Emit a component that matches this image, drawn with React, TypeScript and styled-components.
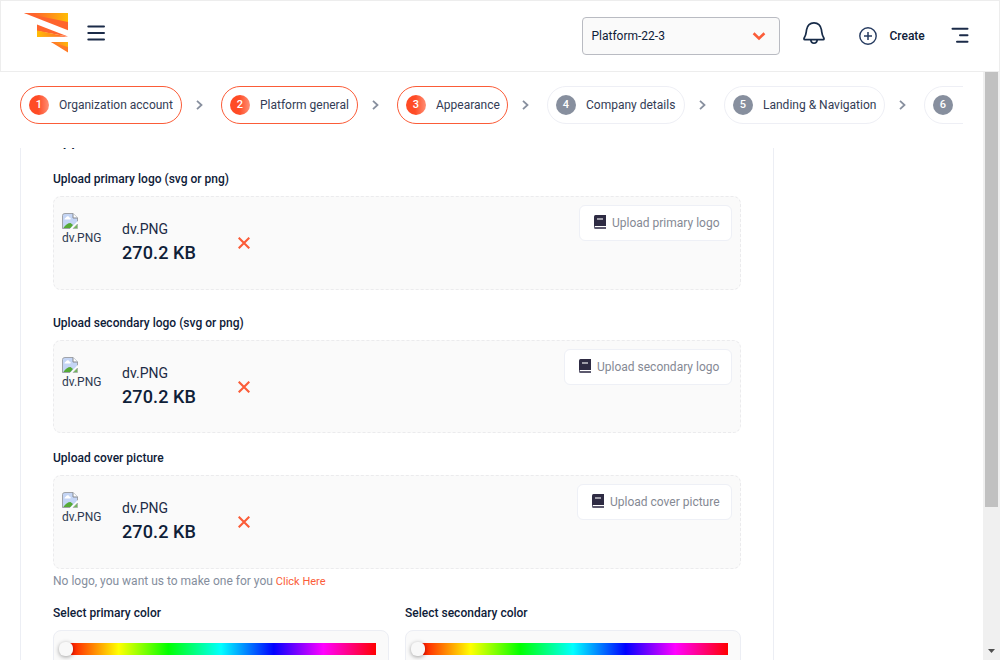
import React from "react";
import styled, { createGlobalStyle } from "styled-components";

const GlobalStyle = createGlobalStyle`
  * { box-sizing: border-box; }
  body {
    margin: 0;
    overflow: hidden;
    background: #fff;
    color: #0e2038;
    font-family: Roboto, "Liberation Sans", sans-serif;
    font-size: 12px;
  }
`;

const Page = styled.div`
  width: 1000px;
  height: 660px;
  display: flex;
  flex-direction: column;
  overflow: hidden;
`;

const Header = styled.header`
  height: 72px;
  flex: none;
  display: flex;
  align-items: flex-start;
  border: 1px solid #ededed;
  padding-left: 23px;
  background: #fff;
`;

const Logo = styled.svg`
  margin-top: 12px;
  flex: none;
`;

const MenuIcon = styled.svg`
  margin: 24px 0 0 19px;
  flex: none;
`;

const PlatformSelect = styled.div`
  width: 198px;
  height: 38px;
  margin: 16px 0 0 auto;
  padding: 0 13px 0 8.5px;
  display: flex;
  align-items: center;
  justify-content: space-between;
  border: 1px solid #b9bbc2;
  border-radius: 4px;
  background: #fafafa;
`;

const BellIcon = styled.svg`
  margin: 20px 0 0 23px;
  flex: none;
`;

const CreateButton = styled.div`
  height: 20px;
  margin: 25px 0 0 34px;
  display: flex;
  align-items: center;
  gap: 12.5px;
  width: 67px;
  font-weight: 500;
  white-space: nowrap;
`;

const FilterIcon = styled.svg`
  margin: 26px 30px 0 25px;
  flex: none;
`;

const Body = styled.div`
  flex: 1;
  min-height: 0;
  display: flex;
`;

const Main = styled.main`
  flex: 1;
  min-width: 0;
  padding: 14px 20px 0;
  display: flex;
  flex-direction: column;
`;

const Steps = styled.nav`
  width: 943px;
  height: 62px;
  flex: none;
  display: flex;
  align-items: flex-start;
  overflow: hidden;
`;

const Step = styled.div<{ $active: boolean; $width: number }>`
  width: ${(p) => p.$width}px;
  height: 38px;
  flex: none;
  padding: 0 8px;
  display: flex;
  align-items: center;
  gap: 10px;
  border: 1px solid ${(p) => (p.$active ? "#fb5c38" : "#eeeff5")};
  border-radius: 19px;
  color: #333c55;
  white-space: nowrap;
`;

const StepNumber = styled.span<{ $active: boolean }>`
  width: 20px;
  height: 20px;
  flex: none;
  border-radius: 50%;
  background: ${(p) => (p.$active ? "linear-gradient(90deg, #ff4b25 45%, #ff8f75)" : "#878f9e")};
  color: #fff;
  font-size: 11px;
  font-weight: 500;
  line-height: 20px;
  text-align: center;
`;

const StepArrow = styled.svg`
  margin: 14px 18.5px 0 13.5px;
  flex: none;
`;

const FormViewport = styled.div`
  flex: 1;
  min-height: 0;
  overflow: hidden;
`;

const FormCard = styled.section`
  width: 754px;
  height: 700px;
  margin-top: -15px;
  padding: 0 32px;
  border: 1px solid #eceef4;
  border-top: 0;
`;

const Title = styled.h2`
  margin: 0;
  height: 37px;
  font-size: 15px;
  font-weight: 500;
  line-height: 16px;
`;

const Label = styled.div`
  height: 26px;
  line-height: 18px;
  font-weight: 500;
  letter-spacing: 0.01px;
`;

const UploadBox = styled.div<{ $gap: number; $height: number }>`
  width: 688px;
  height: ${(p) => p.$height}px;
  margin-bottom: ${(p) => p.$gap}px;
  padding: 8px;
  display: flex;
  align-items: flex-start;
  border: 1px dashed #ebebed;
  border-radius: 8px;
  background: #fafafa;
`;

const Preview = styled.div`
  width: 60px;
  padding-top: 8px;
  color: #2d3950;
  line-height: 18px;
`;

const PreviewImage = styled.svg`
  display: block;
`;

const FileInfo = styled.div`
  width: 116px;
  padding-top: 14px;
`;

const FileName = styled.div`
  font-size: 14px;
  line-height: 20px;
  color: #1c2b46;
`;

const FileSize = styled.div`
  font-size: 18px;
  font-weight: 500;
  line-height: 28px;
  letter-spacing: 0.12px;
`;

const RemoveIcon = styled.svg`
  margin-top: 32px;
`;

const UploadButton = styled.button<{ $width: number }>`
  width: ${(p) => p.$width}px;
  height: 36px;
  margin-left: auto;
  padding: 0 0 0 14px;
  display: flex;
  align-items: center;
  gap: 6px;
  border: 1px solid #eef0f6;
  border-radius: 6px;
  background: #fff;
  color: #858994;
  font: 12px Roboto, "Liberation Sans", sans-serif;
  white-space: nowrap;
`;

const BookGlyph = styled.svg`
  flex: none;
  margin-bottom: 2px;
`;

const Hint = styled.div`
  height: 32px;
  padding-top: 3px;
  line-height: 18px;
  color: #858e9d;
`;

const HintLink = styled.a`
  color: #fb5c38;
  font-size: 11px;
`;

const ColorRow = styled.div`
  display: flex;
  gap: 16px;
  margin-top: 3px;
`;

const ColorField = styled.div`
  width: 336px;
`;

const ColorPanel = styled.div`
  height: 120px;
  padding: 12px 12px 0;
  border: 1px solid #eceef4;
  border-radius: 8px;
  background: #fafafa;
`;

const HueBar = styled.div`
  height: 12px;
  display: flex;
  align-items: center;
  background: linear-gradient(90deg, #f00 0%, #ff0 17%, #0f0 33%, #0ff 50%, #00f 67%, #f0f 83%, #f00 100%);
`;

const HueHandle = styled.span`
  width: 14px;
  height: 14px;
  margin-left: -7px;
  border-radius: 6px;
  background: #f8f8f8;
  box-shadow: 0 1px 4px rgba(0, 0, 0, 0.37);
`;

const ScrollTrack = styled.div`
  width: 17px;
  flex: none;
  padding: 0 2px 7px;
  display: flex;
  flex-direction: column;
  align-items: center;
  justify-content: space-between;
  background: #f0f0f0;
`;

const ScrollThumb = styled.div`
  width: 13px;
  height: 435px;
  background: #c1c1c1;
`;

const steps = [
  { label: "Organization account", width: 162 },
  { label: "Platform general", width: 137 },
  { label: "Appearance", width: 111 },
  { label: "Company details", width: 138 },
  { label: "Landing & Navigation", width: 161 },
  { label: "", width: 140 },
];

const uploads = [
  { label: "Upload primary logo (svg or png)", action: "Upload primary logo", gap: 24, height: 94, width: 153 },
  { label: "Upload secondary logo (svg or png)", action: "Upload secondary logo", gap: 16, height: 93, width: 168 },
  { label: "Upload cover picture", action: "Upload cover picture", gap: 0, height: 94, width: 155 },
];

function BrandLogo() {
  return (
    <Logo width="44" height="40" viewBox="0 0 44 40">
      <defs>
        <linearGradient id="topBand" gradientUnits="userSpaceOnUse" x1="10" y1="0" x2="44" y2="0">
          <stop offset="0" stopColor="#ff642d" />
          <stop offset="1" stopColor="#ffbd05" />
        </linearGradient>
        <linearGradient id="middleBand" gradientUnits="userSpaceOnUse" x1="13" y1="0" x2="40" y2="0">
          <stop offset="0" stopColor="#ffbd05" />
          <stop offset="1" stopColor="#ff642d" />
        </linearGradient>
        <linearGradient id="bottomBand" gradientUnits="userSpaceOnUse" x1="27" y1="0" x2="44" y2="0">
          <stop offset="0" stopColor="#ff702b" />
          <stop offset="1" stopColor="#ffb508" />
        </linearGradient>
      </defs>
      <path d="M0 0H44V17.3Z" fill="#ff642d" />
      <path d="M0 0H44V9Z" fill="url(#topBand)" />
      <path d="M13 11.5L44 23.5L13 18Z" fill="#ff642d" />
      <path d="M13 17.5L44 23.7L13 24Z" fill="url(#middleBand)" />
      <path d="M27 29H44V39.5Z" fill="#ff7a25" />
      <path d="M27 29H44V34Z" fill="url(#bottomBand)" />
    </Logo>
  );
}

function BrokenImage() {
  return (
    <PreviewImage width="16" height="16" viewBox="0 0 16 16">
      <path d="M.5 15.5V2.5Q.5 .5 3 .5H11L15.5 5V9.5L9 15.5Z" fill="#c4d5f5" />
      <path d="M2.5 6.5C2.5 4.8 4 5 4.3 4C5 2.7 7 3 7.3 4.5C9 4.5 9.2 6.5 8 6.5Z" fill="#fff" />
      <path d="M1 15.5C3 12 6 10 8.5 10L11 12L8 15.5Z" fill="#55aa35" />
      <path d="M.5 15.5V2.5Q.5 .5 3 .5H11L15.5 5V8.5M.5 15.5H8" fill="none" stroke="#a0a3a9" />
      <path d="M11 .5V5H15.5" fill="#fff" stroke="#85898f" />
      <path d="M8 16L15.8 8V11L11 16Z" fill="#fff" />
      <path d="M11 15.5L15.5 11V15.5Z" fill="#70b756" stroke="#a0a3a9" strokeWidth=".6" />
    </PreviewImage>
  );
}

function BookIcon() {
  return (
    <BookGlyph width="12" height="14" viewBox="0 0 12 14">
      <path d="M1.5 0H12V11H0V1.5Q0 0 1.5 0Z" fill="#2e2b43" />
      <path d="M3 4H9" stroke="#fff" strokeWidth="1.1" />
      <path d="M0 11H1V12H12V14H1.5Q0 14 0 12.5Z" fill="#5c596e" />
    </BookGlyph>
  );
}

export default function App() {
  return (
    <Page>
      <GlobalStyle />
      <Header>
        <BrandLogo />
        <MenuIcon width="18" height="16" viewBox="0 0 18 16">
          <path d="M1.3 1.5H17M1.3 8H17M1.3 14.5H17" stroke="#1b2b48" strokeWidth="2" strokeLinecap="round" />
        </MenuIcon>
        <PlatformSelect>
          Platform-22-3
          <svg width="14" height="9" viewBox="0 0 14 9">
            <path d="M1.6 1.3L7 6.5L12.4 1.3" fill="none" stroke="#fb5c38" strokeWidth="2.6" />
          </svg>
        </PlatformSelect>
        <BellIcon width="22" height="24" viewBox="0 0 22 24">
          <path
            d="M1.8 18.6C.8 18.6 .8 17.6 1.3 16.8C3.4 13.5 3 11.8 3.6 8.7C4.4 4.2 7 1.8 11 1.8S17.6 4.2 18.4 8.7C19 11.8 18.6 13.5 20.7 16.8C21.2 17.6 21.2 18.6 20.2 18.6Z"
            fill="none"
            stroke="#172b48"
            strokeWidth="1.7"
          />
          <path d="M7.8 19C8.2 23.3 13.8 23.3 14.2 19" fill="none" stroke="#172b48" strokeWidth="1.7" />
        </BellIcon>
        <CreateButton>
          <svg width="18" height="18" viewBox="0 0 18 18">
            <circle cx="9" cy="9" r="8.2" fill="none" stroke="#263b60" strokeWidth="1.4" />
            <path d="M5 9H13M9 5V13" stroke="#263b60" strokeWidth="1.5" />
          </svg>
          Create
        </CreateButton>
        <FilterIcon width="18" height="17" viewBox="0 0 18 17">
          <path d="M1.5 1.7H16.5M9 8.2H16.5M6 14.7H16.5" stroke="#1b2b48" strokeWidth="2" strokeLinecap="round" />
        </FilterIcon>
      </Header>
      <Body>
        <Main>
          <Steps>
            {steps.map((step, i) => (
              <React.Fragment key={i}>
                {i > 0 && (
                  <StepArrow width="7" height="10" viewBox="0 0 7 10">
                    <path d="M1 .8L5.5 5L1 9.2" fill="none" stroke="#878f9e" strokeWidth="1.8" />
                  </StepArrow>
                )}
                <Step $active={i < 3} $width={step.width}>
                  <StepNumber $active={i < 3}>{i + 1}</StepNumber>
                  {step.label}
                </Step>
              </React.Fragment>
            ))}
          </Steps>
          <FormViewport>
            <FormCard>
              <Title>Appearance</Title>
              {uploads.map((item) => (
                <React.Fragment key={item.action}>
                  <Label>{item.label}</Label>
                  <UploadBox $gap={item.gap} $height={item.height}>
                    <Preview>
                      <BrokenImage />
                      dv.PNG
                    </Preview>
                    <FileInfo>
                      <FileName>dv.PNG</FileName>
                      <FileSize>270.2 KB</FileSize>
                    </FileInfo>
                    <RemoveIcon width="12" height="12" viewBox="0 0 12 12">
                      <path d="M.7 .7L11.3 11.3M11.3 .7L.7 11.3" stroke="#fb5c38" strokeWidth="2.1" />
                    </RemoveIcon>
                    <UploadButton $width={item.width}>
                      <BookIcon />
                      {item.action}
                    </UploadButton>
                  </UploadBox>
                </React.Fragment>
              ))}
              <Hint>
                No logo, you want us to make one for you <HintLink>Click Here</HintLink>
              </Hint>
              <ColorRow>
                {["Select primary color", "Select secondary color"].map((label) => (
                  <ColorField key={label}>
                    <Label>{label}</Label>
                    <ColorPanel>
                      <HueBar>
                        <HueHandle />
                      </HueBar>
                    </ColorPanel>
                  </ColorField>
                ))}
              </ColorRow>
            </FormCard>
          </FormViewport>
        </Main>
        <ScrollTrack>
          <ScrollThumb />
          <svg width="7" height="4" viewBox="0 0 7 4">
            <path d="M0 0H7L3.5 4Z" fill="#505050" />
          </svg>
        </ScrollTrack>
      </Body>
    </Page>
  );
}
